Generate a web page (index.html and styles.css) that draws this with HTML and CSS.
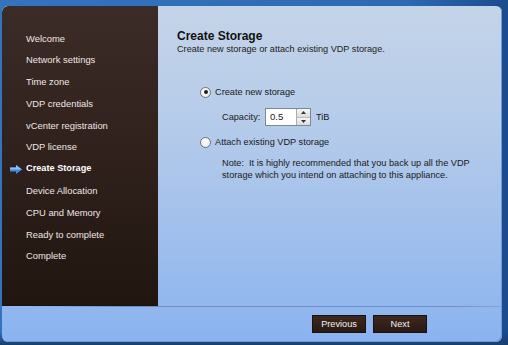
FILE: index.html
```html
<!DOCTYPE html>
<html>
<head>
<meta charset="utf-8">
<link rel="stylesheet" href="styles.css">
</head>
<body>
<div class="frame">
  <div class="panel">
    <div class="main">
      <nav class="sidebar">
        <div class="step">Welcome</div>
        <div class="step">Network settings</div>
        <div class="step">Time zone</div>
        <div class="step">VDP credentials</div>
        <div class="step">vCenter registration</div>
        <div class="step">VDP license</div>
        <div class="step current">
          <svg class="arrow" width="12" height="9" viewBox="0 0 12 9"><path d="M0 2.5h6V0l6 4.5L6 9V6.5H0z" fill="#3d8be6"/><path d="M0 2.5h6V0l6 4.5H0z" fill="#8cc0f5"/></svg>
          Create Storage
        </div>
        <div class="step">Device Allocation</div>
        <div class="step">CPU and Memory</div>
        <div class="step">Ready to complete</div>
        <div class="step">Complete</div>
      </nav>
      <section class="content">
        <h1 class="title">Create Storage</h1>
        <p class="subtitle">Create new storage or attach existing VDP storage.</p>
        <div class="options">
          <label class="radio-row"><span class="radio checked"></span>Create new storage</label>
          <div class="capacity">
            <span class="cap-label">Capacity:</span>
            <span class="spin">
              <span class="spin-value">0.5</span>
              <span class="spin-btns">
                <span class="spin-btn"><svg width="5" height="3" viewBox="0 0 5 3"><path d="M0 3L2.5 0 5 3z" fill="#333"/></svg></span>
                <span class="spin-btn"><svg width="5" height="3" viewBox="0 0 5 3"><path d="M0 0h5L2.5 3z" fill="#333"/></svg></span>
              </span>
            </span>
            <span class="unit">TiB</span>
          </div>
          <label class="radio-row second"><span class="radio"></span>Attach existing VDP storage</label>
          <p class="note">Note:&nbsp; It is highly recommended that you back up all the VDP<br>storage which you intend on attaching to this appliance.</p>
        </div>
      </section>
    </div>
    <footer class="footer">
      <button class="btn">Previous</button>
      <button class="btn">Next</button>
    </footer>
  </div>
</div>
</body>
</html>
```
FILE: styles.css
```css
html, body {
  margin: 0;
  padding: 0;
}
body {
  width: 508px;
  height: 345px;
  overflow: hidden;
  background: linear-gradient(90deg, #3474bd 0%, #2c6ab4 80%, #1c4a8c 100%);
  font-family: "Liberation Sans", Arial, sans-serif;
}
.frame {
  padding: 6px 6px 3px 2px;
  height: 345px;
  box-sizing: border-box;
  background: linear-gradient(180deg, rgba(0,0,0,0) 0%, rgba(0,0,0,0) 96%, #183f6c 100%);
}
.panel {
  width: 500px;
  height: 336px;
  border-radius: 6px;
  overflow: hidden;
  display: flex;
  flex-direction: column;
  background: linear-gradient(180deg, #c4d4e8 0%, #b8cdea 30%, #a6c2eb 60%, #8ab3ef 100%);
  box-shadow: inset -1px -1px 0 #6f9ad6;
}
.main {
  display: flex;
  height: 300px;
  flex: none;
}
.sidebar {
  width: 156px;
  flex: none;
  box-sizing: border-box;
  padding: 21.5px 0 0 0;
  background: linear-gradient(180deg, #3c2c28 0%, #33231f 40%, #261a15 80%, #20150f 100%);
  border-top-left-radius: 6px;
  box-shadow: inset 0 -1px 0 #1a1410;
}
.step {
  position: relative;
  height: 21.8px;
  line-height: 21.8px;
  padding-left: 24px;
  font-size: 9.4px;
  color: #efe6e4;
  white-space: nowrap;
}
.step.current {
  font-weight: bold;
  font-size: 9.2px;
  color: #fff;
}
.arrow {
  position: absolute;
  left: 8px;
  top: 6.5px;
}
.content {
  flex: 1;
  padding: 23px 0 0 19px;
  color: #111;
}
.title {
  margin: 0;
  font-size: 12px;
  line-height: 14px;
  font-weight: bold;
  color: #111;
}
.subtitle {
  margin: 0;
  font-size: 9.15px;
  line-height: 12px;
  color: #222;
}
.options {
  padding: 30px 0 0 23px;
  font-size: 9.2px;
  color: #1a1a1a;
}
.radio-row {
  display: flex;
  align-items: center;
  height: 14px;
  gap: 4px;
}
.radio {
  width: 9px;
  height: 9px;
  border-radius: 50%;
  border: 1px solid #6d7480;
  background: radial-gradient(circle at 40% 35%, #ffffff 0%, #f2f2f2 50%, #d8dbe0 100%);
  position: relative;
  flex: none;
}
.radio.checked::after {
  content: "";
  position: absolute;
  left: 2.5px;
  top: 2.5px;
  width: 4px;
  height: 4px;
  border-radius: 50%;
  background: #1e1e1e;
}
.capacity {
  display: flex;
  align-items: center;
  height: 18px;
  margin: 9px 0 0 22px;
}
.cap-label {
  width: 43px;
}
.spin {
  display: flex;
  height: 18px;
  box-sizing: border-box;
  border: 1px solid #7e8794;
  background: #fff;
}
.spin-value {
  width: 30px;
  padding-left: 4px;
  box-sizing: border-box;
  line-height: 16px;
  font-size: 9.6px;
}
.spin-btns {
  display: flex;
  flex-direction: column;
  width: 13px;
  border-left: 1px solid #a5adb8;
}
.spin-btn {
  flex: 1;
  display: flex;
  align-items: center;
  justify-content: center;
  background: linear-gradient(180deg, #f6f6f6, #dcdcdc);
}
.spin-btn + .spin-btn {
  border-top: 1px solid #b6bcc4;
}
.unit {
  margin-left: 5px;
}
.radio-row.second {
  margin-top: 9px;
}
.note {
  margin: 8px 0 0 22px;
  font-size: 9.2px;
  line-height: 12px;
  color: #1a1a1a;
}
.footer {
  flex: 1;
  display: flex;
  justify-content: flex-end;
  align-items: flex-start;
  gap: 7px;
  padding: 9px 75px 0 0;
  background:
    linear-gradient(90deg, rgba(80,110,150,0) 0%, rgba(80,110,150,0) 5%, rgba(80,110,150,0.55) 25%, rgba(80,110,150,0.55) 90%, rgba(80,110,150,0.2) 100%) top / 100% 1px no-repeat;
}
.btn {
  width: 54px;
  height: 18px;
  padding: 0;
  border: 1px solid #1a120e;
  background: linear-gradient(180deg, #3b2820 0%, #2a1a14 100%);
  color: #f4f0ee;
  font-family: "Liberation Sans", Arial, sans-serif;
  font-size: 9.2px;
  line-height: 16px;
}
```
